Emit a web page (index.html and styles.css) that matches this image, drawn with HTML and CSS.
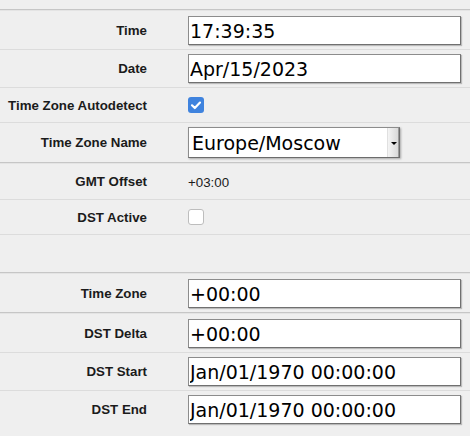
FILE: index.html
```html
<!DOCTYPE html>
<html>
<head>
<meta charset="utf-8">
<link rel="stylesheet" href="styles.css">
</head>
<body>
<div class="form">
  <div class="row sep first">
    <div class="lbl">Time</div>
    <div class="val"><input class="field" type="text" value="17:39:35"></div>
  </div>
  <div class="row">
    <div class="lbl">Date</div>
    <div class="val"><input class="field" type="text" value="Apr/15/2023"></div>
  </div>
  <div class="row chk-row">
    <div class="lbl">Time Zone Autodetect</div>
    <div class="val"><span class="box checked"><svg viewBox="0 0 16 16" width="16" height="16"><path d="M4 8.3 L6.8 11 L12 5.6" fill="none" stroke="#fff" stroke-width="2.2" stroke-linecap="round" stroke-linejoin="round"/></svg></span></div>
  </div>
  <div class="row">
    <div class="lbl">Time Zone Name</div>
    <div class="val">
      <div class="select">
        <span class="sel-text">Europe/Moscow</span>
        <span class="sel-btn"><span class="arrow"></span></span>
      </div>
    </div>
  </div>
  <div class="row sep text-row">
    <div class="lbl">GMT Offset</div>
    <div class="val plain">+03:00</div>
  </div>
  <div class="row chk-row">
    <div class="lbl">DST Active</div>
    <div class="val"><span class="box"></span></div>
  </div>
  <div class="row empty">
    <div class="lbl"></div>
    <div class="val"></div>
  </div>
  <div class="row sep tall">
    <div class="lbl">Time Zone</div>
    <div class="val"><input class="field" type="text" value="+00:00"></div>
  </div>
  <div class="row sep tall">
    <div class="lbl">DST Delta</div>
    <div class="val"><input class="field" type="text" value="+00:00"></div>
  </div>
  <div class="row">
    <div class="lbl">DST Start</div>
    <div class="val"><input class="field" type="text" value="Jan/01/1970 00:00:00"></div>
  </div>
  <div class="row">
    <div class="lbl">DST End</div>
    <div class="val"><input class="field" type="text" value="Jan/01/1970 00:00:00"></div>
  </div>
</div>
</body>
</html>
```

FILE: styles.css
```css
html, body {
  margin: 0;
  padding: 0;
  background: #efefef;
}
body {
  padding-top: 9px;
  font-family: "Liberation Sans", Arial, sans-serif;
  font-size: 13px;
  color: #1a1a1a;
}
.form {
  display: flex;
  flex-direction: column;
}
.row {
  display: grid;
  grid-template-columns: 147px 1fr;
  column-gap: 41px;
  align-items: center;
  border-top: 1px solid #dcdcdc;
  padding: 4px 9px 4px 0;
}
.row.sep {
  border-top: 1px solid #c6c6c6;
  box-shadow: inset 0 1px 0 #e4e4e4;
  padding-top: 5px;
}
.row.first {
  padding-top: 6px;
}
.row.tall {
  padding-top: 6px;
}
.lbl {
  text-align: right;
  font-weight: bold;
  font-size: 13.3px;
  color: #1b1b1b;
}
.val.plain {
  font-size: 13.3px;
  color: #1b1b1b;
  padding-top: 2px;
}
.field {
  display: block;
  box-sizing: border-box;
  width: 100%;
  height: 29px;
  margin: 0;
  padding: 0 1px;
  border: 1px solid #8c8c8c;
  border-right-color: #707070;
  border-bottom-color: #707070;
  box-shadow: 1px 1px 1px rgba(0,0,0,0.22);
  background: #fff;
  font-family: "DejaVu Sans", sans-serif;
  font-size: 19px;
  color: #000;
  outline: none;
}
.chk-row {
  padding-top: 9px;
  padding-bottom: 9px;
}
.text-row {
  min-height: 37px;
  box-sizing: border-box;
}
.empty {
  height: 38px;
  box-sizing: border-box;
}
.box {
  display: block;
  box-sizing: border-box;
  width: 16px;
  height: 16px;
  border-radius: 3px;
  border: 1px solid #bdbdbd;
  background: #fff;
}
.box.checked {
  border: none;
  background: #3f83de;
}
.box svg {
  display: block;
}
.select {
  position: relative;
  box-sizing: border-box;
  width: 212px;
  height: 31px;
  border: 1px solid #8c8c8c;
  border-right-color: #6c6c6c;
  border-bottom-color: #6c6c6c;
  box-shadow: 1px 1px 2px rgba(0,0,0,0.3);
  background: #fff;
  display: flex;
  align-items: center;
}
.sel-text {
  padding-left: 3px;
  font-family: "DejaVu Sans", sans-serif;
  font-size: 19px;
  color: #000;
}
.sel-btn {
  position: absolute;
  top: 0;
  right: 0;
  bottom: 0;
  width: 11px;
  background: linear-gradient(to right, #f4f4f4, #d6d6d6);
  border-left: 1px solid #e0e0e0;
  box-shadow: inset -1px 0 0 #9a9a9a;
}
.arrow {
  position: absolute;
  left: 3px;
  top: 14px;
  width: 0;
  height: 0;
  border-left: 3px solid transparent;
  border-right: 3px solid transparent;
  border-top: 3px solid #000;
}
```
